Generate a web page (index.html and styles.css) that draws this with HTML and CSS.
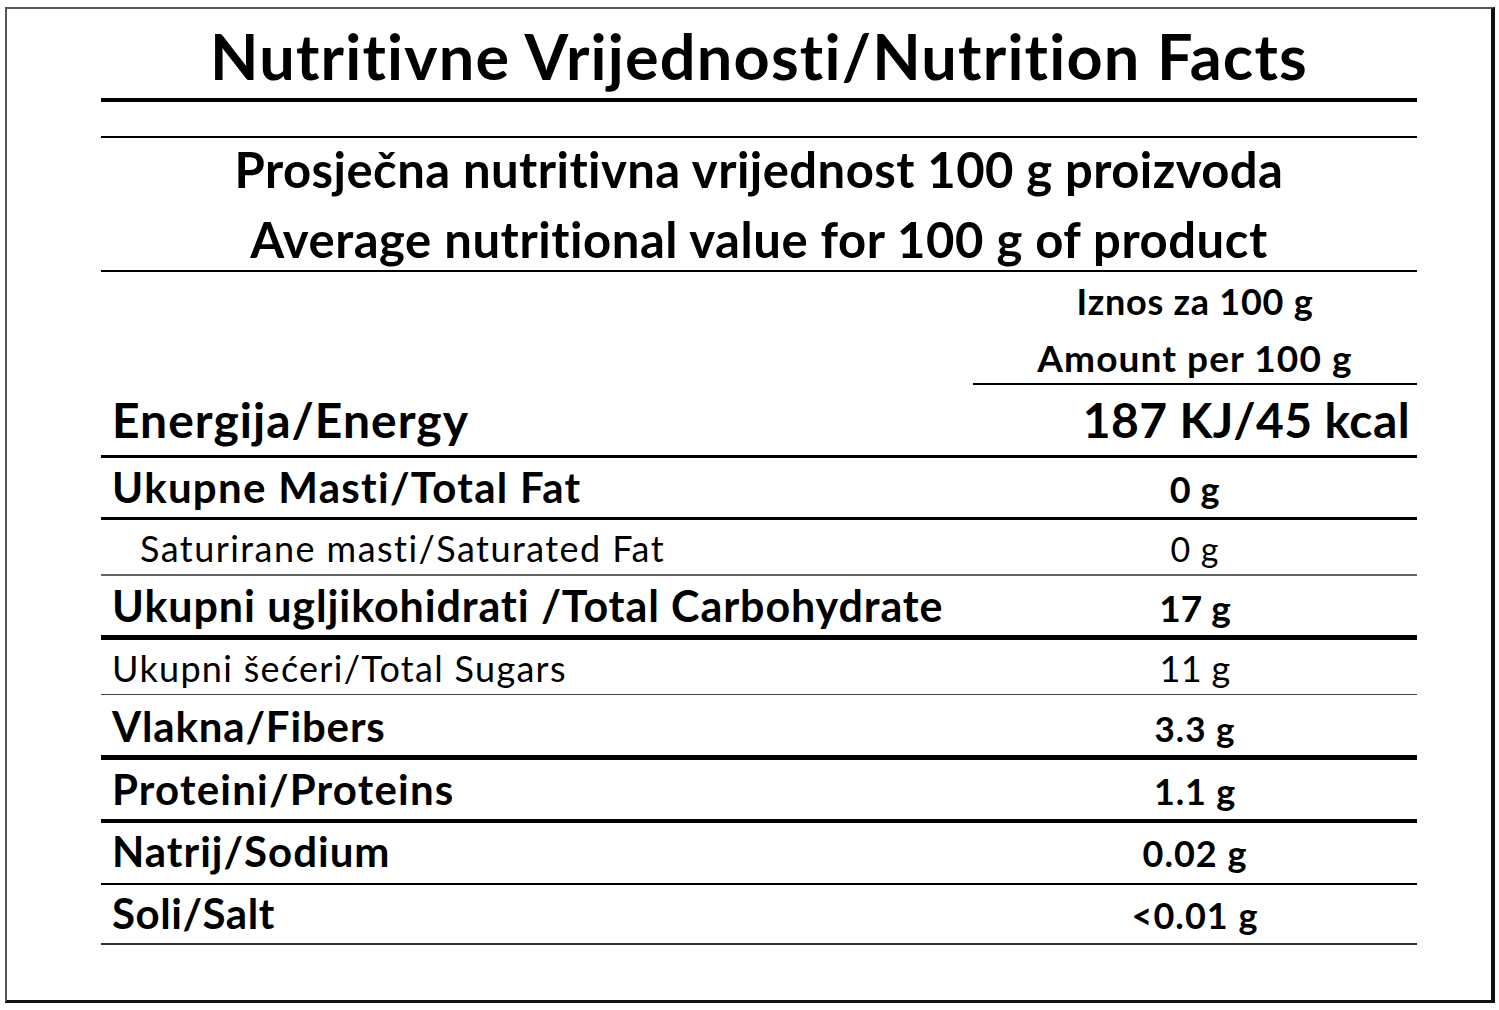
FILE: index.html
```html
<!DOCTYPE html>
<html lang="hr">
<head>
<meta charset="utf-8">
<title>Nutritivne Vrijednosti / Nutrition Facts</title>
<link rel="stylesheet" href="styles.css">
</head>
<body>
<div class="frame">
  <div class="title">Nutritivne Vrijednosti/Nutrition Facts</div>
  <div class="spacer"></div>
  <div class="sub">
    <div class="sub-line sub-1">Prosječna nutritivna vrijednost 100 g proizvoda</div>
    <div class="sub-line sub-2">Average nutritional value for 100 g of product</div>
  </div>
  <div class="amount-row">
    <div class="amount-empty"></div>
    <div class="amount">
      <div class="amount-1">Iznos za 100 g</div>
      <div class="amount-2">Amount per 100 g</div>
    </div>
  </div>
  <div class="row r-energy">
    <div class="lbl">Energija/Energy</div>
    <div class="val val-right">187 KJ/45 kcal</div>
  </div>
  <div class="row r-fat">
    <div class="lbl">Ukupne Masti/Total Fat</div>
    <div class="val">0 g</div>
  </div>
  <div class="row r-sat">
    <div class="lbl lbl-sub">Saturirane masti/Saturated Fat</div>
    <div class="val val-reg">0 g</div>
  </div>
  <div class="row r-carb">
    <div class="lbl">Ukupni ugljikohidrati /Total Carbohydrate</div>
    <div class="val">17 g</div>
  </div>
  <div class="row r-sugar">
    <div class="lbl lbl-reg">Ukupni šećeri/Total Sugars</div>
    <div class="val val-reg">11 g</div>
  </div>
  <div class="row r-fiber">
    <div class="lbl">Vlakna/Fibers</div>
    <div class="val">3.3 g</div>
  </div>
  <div class="row r-protein">
    <div class="lbl">Proteini/Proteins</div>
    <div class="val">1.1 g</div>
  </div>
  <div class="row r-sodium">
    <div class="lbl">Natrij/Sodium</div>
    <div class="val">0.02 g</div>
  </div>
  <div class="row r-salt">
    <div class="lbl">Soli/Salt</div>
    <div class="val">&lt;0.01 g</div>
  </div>
</div>
</body>
</html>
```
FILE: styles.css
```css
* { box-sizing: border-box; }

html, body {
  margin: 0;
  padding: 0;
  background: #ffffff;
}

body {
  font-family: "Lato", "Open Sans", "Liberation Sans", sans-serif;
  font-variant-ligatures: none;
  font-feature-settings: "liga" 0, "clig" 0;
  color: #000;
}

.frame {
  margin: 7px 0 0 5px;
  width: 1490px;
  height: 996px;
  border-top: 2px solid #555;
  border-left: 2px solid #555;
  border-right: 4px solid #111;
  border-bottom: 3px solid #111;
  padding-left: 94px;
}

.frame > div {
  width: 1316px;
}

/* ---------- heading ---------- */
.title {
  height: 93px;
  padding-top: 4px;
  line-height: 85px;
  font-size: 63px;
  font-weight: 700;
  letter-spacing: 1.2px;
  text-align: center;
  white-space: nowrap;
  border-bottom: 4px solid #000;
}

.spacer {
  height: 36px;
  border-bottom: 2px solid #000;
}

.sub {
  height: 134px;
  border-bottom: 2px solid #000;
  font-size: 49px;
  font-weight: 700;
  text-align: center;
  white-space: nowrap;
}

.sub-1 {
  height: 62px;
  line-height: 62px;
  letter-spacing: 0.45px;
}

.sub-2 {
  height: 70px;
  padding-top: 8px;
  line-height: 62px;
  letter-spacing: 0.55px;
}

/* ---------- amount header ---------- */
.amount-row {
  display: grid;
  grid-template-columns: 872px 444px;
}

.amount {
  height: 113px;
  border-bottom: 2px solid #000;
  font-weight: 700;
  text-align: center;
  white-space: nowrap;
}

.amount-1 {
  height: 58px;
  line-height: 58px;
  font-size: 36px;
  letter-spacing: 0.75px;
}

.amount-2 {
  height: 53px;
  padding-top: 3px;
  line-height: 49px;
  font-size: 37px;
  letter-spacing: 1.1px;
}

/* ---------- rows ---------- */
.row {
  display: grid;
  grid-template-columns: 872px 444px;
  align-items: baseline;
  font-weight: 700;
  white-space: nowrap;
  border-bottom: 2px solid #000;
  overflow: visible;
}

.lbl {
  padding-left: 11px;
  font-size: 42px;
}

.val {
  text-align: center;
  font-size: 36px;
  letter-spacing: 1px;
}

.val-right {
  text-align: right;
  padding-right: 7px;
  font-size: 48px;
  letter-spacing: 0.4px;
}

.lbl-sub {
  padding-left: 39px;
  font-size: 36px;
  font-weight: 400;
  letter-spacing: 1.45px;
}

.lbl-reg {
  font-size: 36px;
  font-weight: 400;
  letter-spacing: 1.3px;
}

.val-reg {
  font-weight: 400;
}

.r-energy {
  height: 73px;
  line-height: 69px;
  border-bottom-width: 3px;
}
.r-energy .lbl {
  font-size: 48px;
  letter-spacing: 1px;
}

.r-fat {
  height: 62px;
  line-height: 58px;
  border-bottom-width: 3px;
}
.r-fat .lbl { letter-spacing: 1.3px; }
.r-fat .val { letter-spacing: 0.6px; }

.r-sat {
  height: 56px;
  line-height: 56px;
  border-bottom: 2px solid #666;
}
.r-sat .val { font-size: 34px; }

.r-carb {
  height: 64px;
  line-height: 59px;
  border-bottom-width: 5px;
}
.r-carb .lbl {
  font-size: 43px;
  letter-spacing: 0.9px;
}
.r-carb .val {
  font-size: 37px;
  letter-spacing: 0;
}

.r-sugar {
  height: 55px;
  line-height: 56px;
  border-bottom: 1px solid #444;
}
.r-sugar .val { letter-spacing: 0.3px; }

.r-fiber {
  height: 65px;
  line-height: 62px;
  border-bottom-width: 5px;
}
.r-fiber .lbl { letter-spacing: 0.85px; }
.r-fiber .val {
  font-size: 35px;
  letter-spacing: 1px;
}

.r-protein {
  height: 63px;
  line-height: 58px;
  border-bottom-width: 4px;
}
.r-protein .lbl { letter-spacing: 1.2px; }
.r-protein .val { letter-spacing: 0.8px; }

.r-sodium {
  height: 62px;
  line-height: 57px;
}
.r-sodium .lbl { letter-spacing: 1px; }

.r-salt {
  height: 60px;
  line-height: 56px;
  border-bottom: 2px solid #333;
}
.r-salt .lbl { letter-spacing: 0.55px; }
```
